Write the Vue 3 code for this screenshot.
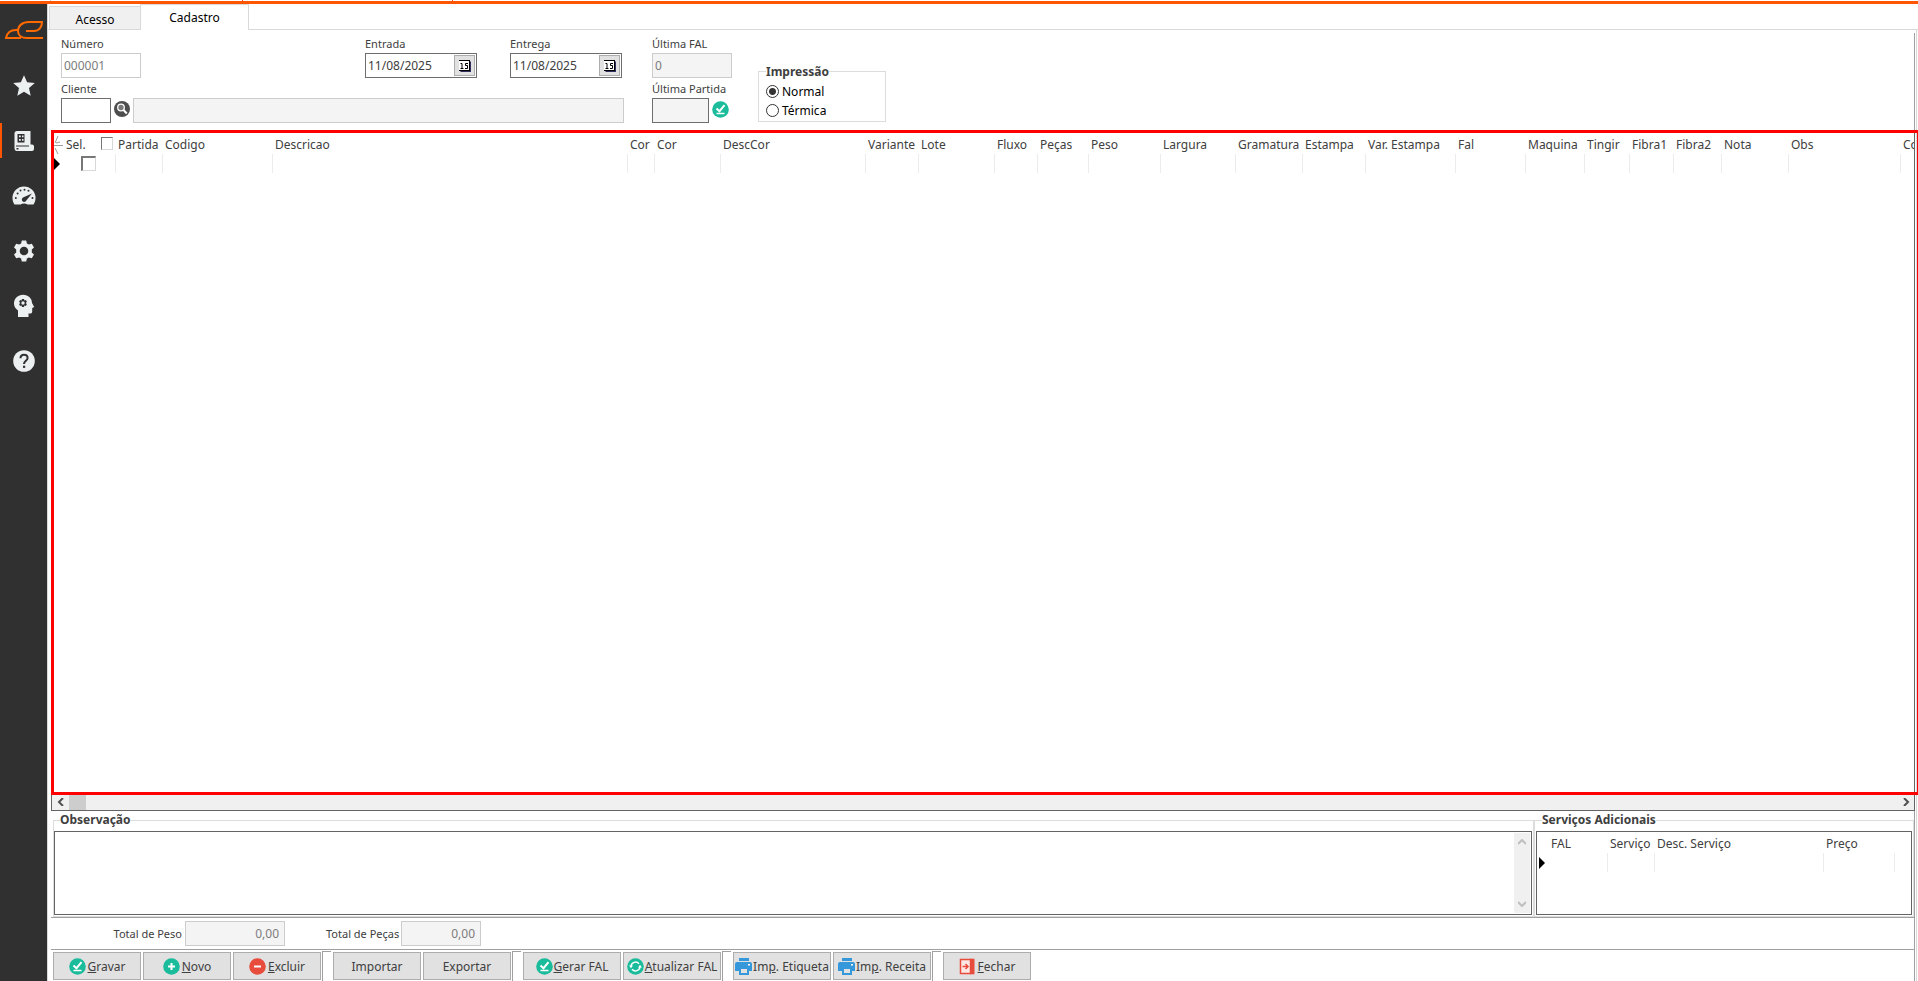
<script setup>
import { ref } from 'vue'

const tabs = ['Acesso', 'Cadastro']
const activeTab = ref('Cadastro')
const impressao = ref('Normal')
const todos = ref(false)
const linhaSel = ref(false)

const nav = ['Favoritos', 'Cadastros', 'Painel', 'Configurações', 'Inteligência', 'Ajuda']

const columns = [
  { label: 'Partida', width: 47 },
  { label: 'Codigo', width: 110 },
  { label: 'Descricao', width: 355 },
  { label: 'Cor', width: 27 },
  { label: 'Cor', width: 66 },
  { label: 'DescCor', width: 145 },
  { label: 'Variante', width: 53 },
  { label: 'Lote', width: 76 },
  { label: 'Fluxo', width: 43 },
  { label: 'Peças', width: 51 },
  { label: 'Peso', width: 72 },
  { label: 'Largura', width: 75 },
  { label: 'Gramatura', width: 67 },
  { label: 'Estampa', width: 63 },
  { label: 'Var. Estampa', width: 90 },
  { label: 'Fal', width: 70 },
  { label: 'Maquina', width: 59 },
  { label: 'Tingir', width: 45 },
  { label: 'Fibra1', width: 44 },
  { label: 'Fibra2', width: 48 },
  { label: 'Nota', width: 67 },
  { label: 'Obs', width: 112 },
  { label: 'Co', width: 100 },
]

const servicos = [
  { label: 'FAL', width: 59 },
  { label: 'Serviço', width: 47 },
  { label: 'Desc. Serviço', width: 169 },
  { label: 'Preço', width: 71 },
]

const groups = [
  [
    { icon: 'check', pre: '', key: 'G', post: 'ravar' },
    { icon: 'plus', pre: '', key: 'N', post: 'ovo' },
    { icon: 'minus', pre: '', key: 'E', post: 'xcluir' },
  ],
  [
    { icon: '', pre: 'Importar', key: '', post: '' },
    { icon: '', pre: 'Exportar', key: '', post: '' },
  ],
  [
    { icon: 'check', pre: '', key: 'G', post: 'erar FAL', wide: true },
    { icon: 'refresh', pre: '', key: 'A', post: 'tualizar FAL', wide: true },
  ],
  [
    { icon: 'print', pre: 'Im', key: 'p', post: '. Etiqueta', wide: true },
    { icon: 'print', pre: 'Im', key: 'p', post: '. Receita', wide: true },
  ],
  [{ icon: 'exit', pre: '', key: 'F', post: 'echar' }],
]
</script>

<template>
  <div class="app">
    <div class="topstrip"><span class="stub"></span><span class="stub short"></span></div>
    <div class="shell">
      <nav class="sidebar">
        <div class="logo">
          <svg width="40" height="20" viewBox="0 0 40 20" fill="none" stroke="#ff6a00" stroke-width="2">
            <path d="M15 10H12C6 10 3 13 2 18H17M39 18H23C17 18 14 15 14 11C14 6 18 2 25 2H38C38 7 35 11 30 11H22" />
          </svg>
        </div>
        <button v-for="(n, i) in nav" :key="n" class="nav" :class="{ on: i === 1 }" :aria-label="n">
          <svg width="24" height="24" viewBox="0 0 24 24" fill="#ecf0f1">
            <path v-if="i === 0" d="M12 1.2l3.1 7.1 7.7.7-5.8 5.1 1.7 7.6L12 17.7l-6.7 4 1.7-7.6L1.200 9l7.700-.7z" />
            <g v-else-if="i === 1">
              <path d="M5 2h13.500v13.500H20a2 2 0 0 1 2 2V20a2 2 0 0 1-2 2H4.500A2.500 2.500 0 0 1 2.500 19.500V4.500A2.500 2.500 0 0 1 5 2z" />
              <path d="M5.500 5h7v8.500h-7zM4 16.500h13v1H4zM4.500 19h2v1.500h-2z" fill="#303030" />
              <path d="M7 6.500h1.800v1.800H7zM10 6.500h1.500v1.800H10zM7 10h1.800v1.800H7zM10 10h1.500v1.800H10z" />
            </g>
            <g v-else-if="i === 2">
              <path d="M12 2.500A11.500 11.500 0 0 0 .500 14c0 2.500.7 4.700 2 6.500h6c2-1.300 5-1.300 7 0h6c1.300-1.800 2-4 2-6.500A11.500 11.500 0 0 0 12 2.500z" />
              <g fill="#303030">
                <circle cx="3.800" cy="14" r="1" /><circle cx="5.600" cy="9.500" r="1" /><circle cx="8.500" cy="6.600" r="1" />
                <circle cx="12.500" cy="5.700" r="1" /><circle cx="16.500" cy="6.800" r="1" /><circle cx="20.500" cy="14" r="1" />
                <path d="M20 9.500l-5.500 6.700a2.400 2.400 0 1 1-3-3z" />
              </g>
            </g>
            <path v-else-if="i === 3" fill-rule="evenodd" d="M9.800 1.500h4.400l.7 3 2 1.100 2.900-.9 2.200 3.800-2.200 2.100v2.800l2.200 2.100-2.200 3.800-2.900-.9-2 1.100-.7 3H9.800l-.7-3-2-1.100-2.900.9L2 15.500l2.200-2.100v-2.800L2 8.500l2.200-3.800 2.900.9 2-1.100zM12 7.700a4.300 4.300 0 1 0 0 8.600 4.300 4.300 0 0 0 0-8.600z" />
            <g v-else-if="i === 4">
              <path d="M11 .8c5.500 0 9 3.700 9 8.200l2.200 4-2 1v3.500c0 1.500-.8 2-2 2h-1.700V23H6v-6.500C3.500 14.500 2 12.500 2 9.500 2 4.500 6 .8 11 .8z" />
              <path fill="#303030" fill-rule="evenodd" d="M10 5h2l.4 1.500 1.500-.4 1 1.700L13.800 9l1.100 1.200-1 1.700-1.500-.4L12 13h-2l-.4-1.500-1.500.4-1-1.700L8.200 9 7.100 7.800l1-1.700 1.500.4zM11 7.300a1.700 1.700 0 1 0 0 3.400 1.700 1.700 0 0 0 0-3.400z" />
            </g>
            <g v-else>
              <circle cx="12" cy="12" r="10.800" />
              <path d="M8.500 9.300C8.500 7 10 5.700 12 5.700s3.600 1.300 3.600 3.300c0 2.700-3.600 2.900-3.600 6" fill="none" stroke="#303030" stroke-width="2" />
              <path d="M11 16.700h2.200v2.200H11z" fill="#303030" />
            </g>
          </svg>
        </button>
      </nav>

      <main class="main">
        <div class="tabs" role="tablist">
          <button v-for="t in tabs" :key="t" role="tab" class="tab" :class="{ active: t === activeTab }" @click="activeTab = t">{{ t }}</button>
        </div>

        <div class="page">
          <form class="form" @submit.prevent>
            <div class="fields">
              <div class="field">
                <label for="numero">Número</label>
                <input id="numero" class="box soft w80" value="000001" readonly />
              </div>
              <div v-for="d in ['Entrada', 'Entrega']" :key="d" class="field">
                <label :for="d">{{ d }}</label>
                <div class="date">
                  <input :id="d" value="11/08/2025" />
                  <button type="button" :aria-label="'Calendário ' + d">
                    <svg width="12" height="12" viewBox="0 0 12 12">
                      <path d="M1.500 1.500H12V12H1.500z" fill="#303060" /><path d="M0 0h11v11H0z" fill="#fff" />
                      <path d="M0 .5h11M0 10.500h11M10.500 0v11" stroke="#000" fill="none" />
                      <path d="M1.500 3.500H3v4.500M1.500 8.500h3M9 3.500H6.500v2h2v3H6" stroke="#000" fill="none" />
                    </svg>
                  </button>
                </div>
              </div>
              <div class="field client">
                <label for="cliente">Cliente</label>
                <div class="line">
                  <input id="cliente" class="box w50" />
                  <button type="button" class="round" aria-label="Pesquisar cliente">
                    <svg width="16" height="16" viewBox="0 0 16 16">
                      <circle cx="8" cy="8" r="8" fill="#4d4d4d" />
                      <circle cx="7" cy="6.500" r="3.300" fill="#777" stroke="#fff" stroke-width="1.300" />
                      <path d="M9.500 9l3.300 3.500" stroke="#fff" stroke-width="2" />
                    </svg>
                  </button>
                  <input class="box soft gray grow" aria-label="Nome do cliente" readonly />
                </div>
              </div>
            </div>
            <div class="last">
              <div class="field">
                <label for="fal">Última FAL</label>
                <input id="fal" class="box soft gray w80" value="0" readonly />
              </div>
              <div class="field">
                <label for="partida">Última Partida</label>
                <div class="line">
                  <input id="partida" class="box gray w57" readonly />
                  <button type="button" class="round" aria-label="Confirmar partida">
                    <svg width="17" height="17" viewBox="0 0 17 17">
                      <circle cx="8.500" cy="8.500" r="8.300" fill="#1abc9c" />
                      <path d="M4.500 7.500l3 2.700 5-6" fill="none" stroke="#fff" stroke-width="2" /><path d="M4.500 12.500h8" stroke="#fff" stroke-width="1.500" />
                    </svg>
                  </button>
                </div>
              </div>
            </div>
            <fieldset class="print">
              <legend>Impressão</legend>
              <label v-for="o in ['Normal', 'Térmica']" :key="o"><input v-model="impressao" type="radio" name="impressao" :value="o" />{{ o }}</label>
            </fieldset>
          </form>

          <section class="grid">
            <div class="view">
              <table class="data">
                <colgroup>
                  <col class="c-ind" /><col class="c-sel" />
                  <col v-for="(c, i) in columns" :key="i" :style="{ width: c.width + 'px' }" />
                </colgroup>
                <thead>
                  <tr>
                    <th class="ind">
                      <svg width="9" height="19" viewBox="0 0 9 19" stroke="#999" fill="none"><path d="M0 10.500h9M1 8l3-7M1 13l3 6M2 8l4-1" /></svg>
                    </th>
                    <th class="sel"><div>Sel.<input v-model="todos" type="checkbox" aria-label="Selecionar todos" /></div></th>
                    <th v-for="(c, i) in columns" :key="i">{{ c.label }}</th>
                  </tr>
                </thead>
                <tbody>
                  <tr>
                    <td class="ind"><i class="marker"></i></td>
                    <td class="pick"><input v-model="linhaSel" type="checkbox" aria-label="Selecionar linha" /></td>
                    <td v-for="(c, i) in columns" :key="i"></td>
                  </tr>
                </tbody>
              </table>
            </div>
            <div class="hscroll">
              <button aria-label="Rolar à esquerda"><svg width="8" height="8" viewBox="0 0 8 8"><path d="M6 0L2 4l4 4" /></svg></button>
              <span class="thumb"></span>
              <button class="end" aria-label="Rolar à direita"><svg width="8" height="8" viewBox="0 0 8 8"><path d="M2 0l4 4-4 4" /></svg></button>
            </div>
            <div class="highlight"></div>
          </section>

          <section class="lower">
            <fieldset class="obs">
              <legend><label for="obs">Observação</label></legend>
              <div class="memo">
                <textarea id="obs"></textarea>
                <div class="vscroll">
                  <svg width="8" height="6" viewBox="0 0 8 6"><path d="M0 5l4-4 4 4" /></svg>
                  <svg width="8" height="6" viewBox="0 0 8 6"><path d="M0 1l4 4 4-4" /></svg>
                </div>
              </div>
            </fieldset>
            <fieldset class="serv">
              <legend>Serviços Adicionais</legend>
              <div class="mini">
                <table class="data">
                  <colgroup><col class="c-mini" /><col v-for="s in servicos" :key="s.label" :style="{ width: s.width + 'px' }" /><col /></colgroup>
                  <thead><tr><th></th><th v-for="s in servicos" :key="s.label">{{ s.label }}</th><th></th></tr></thead>
                  <tbody><tr><td class="ind"><i class="marker"></i></td><td v-for="(s, i) in servicos" :key="s.label" :class="{ plain: i === 0 }"></td><td></td></tr></tbody>
                </table>
              </div>
            </fieldset>
          </section>

          <section class="totals">
            <label for="peso">Total de Peso</label>
            <input id="peso" class="box soft gray w100" value="0,00" readonly />
            <label for="pecas">Total de Peças</label>
            <input id="pecas" class="box soft gray w80" value="0,00" readonly />
          </section>

          <footer class="toolbar">
            <div v-for="(g, gi) in groups" :key="gi" class="group">
              <button v-for="b in g" :key="b.pre + b.post" class="btn" :class="{ wide: b.wide }">
                <svg v-if="b.icon" width="17" height="17" viewBox="0 0 17 17" fill="none" stroke="#fff">
                  <g v-if="b.icon === 'check'">
                    <circle cx="8.500" cy="8.500" r="8.300" fill="#1abc9c" stroke="none" />
                    <path d="M4.500 7.500l3 2.700 5-6" stroke-width="2" /><path d="M4.500 12.500h8" stroke-width="1.500" />
                  </g>
                  <g v-else-if="b.icon === 'plus'">
                    <circle cx="8.500" cy="8.500" r="8.300" fill="#1abc9c" stroke="none" /><path d="M5 8.500h7M8.500 5v7" stroke-width="2" />
                  </g>
                  <g v-else-if="b.icon === 'minus'">
                    <circle cx="8.500" cy="8.500" r="8.300" fill="#e74c3c" stroke="none" /><path d="M5 8.500h7" stroke-width="2" />
                  </g>
                  <g v-else-if="b.icon === 'refresh'">
                    <circle cx="8.500" cy="8.500" r="8.300" fill="#1abc9c" stroke="none" />
                    <path d="M4 8.500A4.500 4.500 0 0 1 12 5.800M13 8.500A4.500 4.500 0 0 1 5 11.200" stroke-width="1.500" />
                    <path d="M2 7.500h4l-2 2.800zM11 9.500h4l-2-2.800z" fill="#fff" stroke="none" />
                  </g>
                  <g v-else-if="b.icon === 'print'" stroke="none" fill="#3498db">
                    <path d="M4 0h10v3H4zM2 4h13a2 2 0 0 1 2 2v7h-3v4H4v-4H0V6a2 2 0 0 1 2-2z" />
                    <path d="M6 11h6v4H6z" fill="#e1e1e1" /><path d="M13 6h2v1.500h-2z" fill="#fff" />
                  </g>
                  <g v-else>
                    <path d="M1.500 1.500h10v14h-10z" fill="#fde8e5" stroke="#e74c3c" stroke-width="1.500" /><path d="M11 .7h4.500v15.600H11z" fill="#e74c3c" stroke="none" />
                    <path d="M3.500 8.500h5M6.500 6l2.500 2.500L6.500 11" stroke="#e74c3c" stroke-width="1.500" />
                  </g>
                </svg>
                <span>{{ b.pre }}<u>{{ b.key }}</u>{{ b.post }}</span>
              </button>
              <i v-if="gi < groups.length - 1" class="sep"></i>
            </div>
          </footer>
        </div>
      </main>
    </div>
  </div>
</template>

<style>
body { margin: 0; background: #fff; }
</style>

<style scoped>
.app { display: flex; flex-direction: column; height: 100vh; min-height: 600px; overflow: hidden; font: 12px/16px "Noto Sans", "Open Sans", sans-serif; color: #404040; background: #fff; }
.app * { box-sizing: border-box; }
button, input, textarea { font: inherit; color: inherit; border-radius: 0; margin: 0; }
button { padding: 0; }
.topstrip { display: flex; flex: none; height: 4px; border-bottom: 3px solid #ff5500; padding-left: 50px; }
.stub { width: 193px; border-left: 1px solid #ccc; border-right: 1px solid #ff5500; }
.stub.short { width: 210px; border-left: 0; }
.shell { display: flex; flex: 1; min-height: 0; }

.sidebar { width: 47px; flex: none; display: flex; flex-direction: column; gap: 20px; background: #303030; }
.logo { height: 44px; padding: 16px 0 0 4px; }
.nav { height: 35px; border: 0; border-left: 2px solid transparent; background: none; display: flex; align-items: center; justify-content: center; padding-right: 1px; }
.nav.on { border-left-color: #ff5500; }

.main { flex: 1; min-width: 0; display: flex; flex-direction: column; border-left: 1px solid #d9d9d9; }
.tabs { display: flex; align-items: flex-end; height: 26px; flex: none; border-bottom: 1px solid #d9d9d9; padding-left: 1px; }
.tab { width: 91px; height: 23px; border: 1px solid #d9d9d9; border-width: 1px 0 0 1px; background: #f0f0f0; color: #000; padding-top: 3px; }
.tab.active { width: 109px; height: 26px; margin-bottom: -1px; border-width: 1px 1px 0; background: #fff; padding-top: 0; }
.page { flex: 1; min-height: 0; display: flex; flex-direction: column; margin-right: 1px; padding: 0 1px 0 3px; border-right: 1px solid #d9d9d9; }

.form { display: flex; align-items: flex-start; flex: none; margin-top: 3px; padding: 3px 10px 7px; border-right: 1px solid #a0a0a0; }
.fields { display: grid; grid-template-columns: 304px 145px 114px; row-gap: 3px; margin-right: 28px; }
.client { grid-column: 1 / -1; }
.field > label { display: block; height: 17px; font-size: 11px; }
.box { height: 25px; padding: 0 2px; border: 1px solid #6e6e6e; background: #fff; display: block; outline: 0; }
.soft { border-color: #ccc; color: #7c7c7c; }
.gray { background: #f4f4f4; }
.w50 { width: 50px; }
.w57 { width: 57px; }
.w80 { width: 80px; }
.w100 { width: 100px; }
.grow { flex: 1; }
.line { display: flex; align-items: center; }
.round { width: 22px; height: 17px; border: 0; background: none; display: flex; align-items: center; justify-content: center; margin-bottom: 3px; }
.date { display: flex; width: 112px; height: 25px; padding: 1px; border: 1px solid #6e6e6e; }
.date input { flex: 1; width: 0; border: 0; padding: 0 1px; }
.date button { width: 21px; border: 1px solid #adadad; background: #e1e1e1; display: flex; align-items: center; justify-content: center; }
.last { display: grid; row-gap: 3px; margin-right: 26px; }
fieldset { margin: 0; min-width: 0; border: 1px solid #dcdcdc; padding: 0; }
legend { font-weight: bold; padding: 0; margin-left: 6px; height: 16px; }
.print { width: 128px; height: 59px; margin-top: 27px; padding: 3px 7px; color: #000; }
.print legend { margin-left: 0; line-height: 18px; color: #404040; }
.print label { display: flex; align-items: center; gap: 3px; height: 19px; }
.print input { appearance: none; width: 13px; height: 13px; border: 1px solid #333; border-radius: 50%; background: #fff; }
.print input:checked { background: radial-gradient(circle, #333 3px, #fff 4px); }

.grid { position: relative; flex: 1; min-height: 0; display: flex; flex-direction: column; border: 1px solid #646464; }
.view { flex: 1; min-height: 0; overflow: hidden; padding-top: 3px; }
.data { table-layout: fixed; border-collapse: separate; border-spacing: 0; width: 100%; }
.c-ind { width: 12px; }
.c-mini { width: 11px; }
.c-sel { width: 51px; }
.data th { height: 20px; padding: 2px 0 0 3px; text-align: left; font-weight: normal; white-space: nowrap; overflow: hidden; }
.data td { height: 19px; padding: 0; border-left: 1px solid #ececec; }
.data td.ind, .data td.pick, .data td.plain { border-left: 0; }
.data th.ind { padding: 0 0 0 2px; line-height: 0; }
.data th.sel { padding: 2px 2px 0; }
.sel div { display: flex; justify-content: space-between; align-items: flex-start; }
.data input { appearance: none; display: block; width: 12px; height: 13px; border: 1px solid #d8d8d8; border-top-color: #777; border-left-color: #777; background: #fff; }
.data .pick input { width: 15px; height: 15px; margin: 0 0 0 17px; border-width: 2px 1px 1px 2px; }
.marker { display: block; width: 6px; margin-left: 2px; border: 6px solid transparent; border-left-color: #000; border-right: 0; }
.hscroll { display: flex; height: 16px; flex: none; background: #f0f0f0; }
.hscroll button { width: 17px; border: 0; background: none; display: flex; align-items: center; justify-content: center; }
.hscroll .end { margin-left: auto; }
.hscroll path { fill: none; stroke: #505050; stroke-width: 2; }
.thumb { width: 17px; background: #cdcdcd; }
.highlight { position: absolute; top: -1px; left: -1px; right: -4px; bottom: 15px; border: 3px solid #f00; border-right-width: 1px; pointer-events: none; }

.lower { display: flex; flex: none; padding: 1px 0 0 2px; border-right: 1px solid #a0a0a0; border-bottom: 1px solid #a0a0a0; }
.obs { flex: 1; padding: 3px 1px 1px 0; }
.serv { width: 380px; padding: 3px 1px 1px; }
.memo, .mini { height: 84px; border: 1px solid #646464; background: #fff; }
.memo { display: flex; padding: 1px; }
.memo textarea { flex: 1; border: 0; resize: none; outline: 0; overflow: hidden; }
.vscroll { width: 16px; background: #f0f0f0; display: flex; flex-direction: column; align-items: center; justify-content: space-between; padding: 6px 0; }
.vscroll path { fill: none; stroke: #bfbfbf; stroke-width: 2; }
.mini { padding-top: 1px; }
.totals { display: flex; align-items: center; flex: none; padding: 3px 0 3px 59px; border-right: 1px solid #a0a0a0; border-bottom: 1px solid #a0a0a0; }
.totals label { width: 72px; margin-right: 3px; font-size: 11px; text-align: right; white-space: nowrap; }
.totals input { text-align: right; padding-right: 5px; }
.totals input + label { margin-left: 41px; }
.toolbar { display: flex; flex: none; height: 31px; padding: 1px 0 0 2px; border-right: 1px solid #a0a0a0; }
.group { display: flex; gap: 2px; }
.btn { width: 88px; height: 28px; margin-top: 1px; border: 1px solid #adadad; background: #e1e1e1; display: flex; align-items: center; justify-content: center; gap: 2px; white-space: nowrap; }
.btn.wide { width: 98px; gap: 1px; }
.btn svg { flex: none; }
.btn span { padding-top: 2px; }
.sep { width: 9px; margin: 0 2px 0 -1px; border: 1px solid #a0a0a0; border-width: 1px 0 0 1px; }
</style>
